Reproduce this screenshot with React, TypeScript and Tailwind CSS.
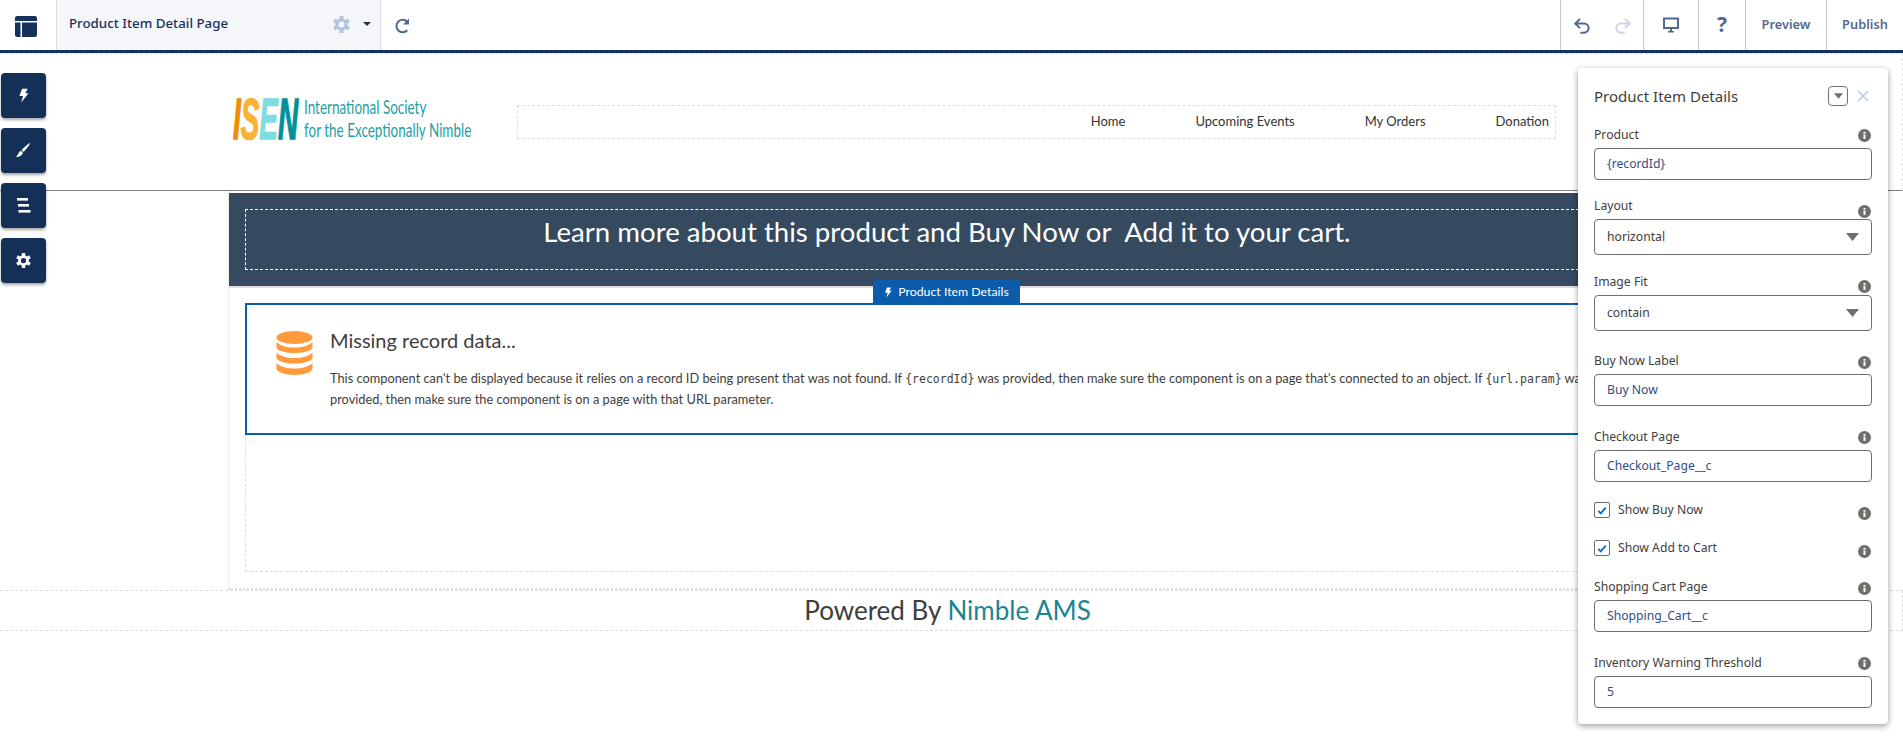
import React, { FC, ReactNode } from "react";
import { Undo2, Redo2, X } from "lucide-react";

const BoltIcon: FC<{ className?: string }> = ({ className }) => (
  <svg viewBox="0 0 12 16" className={className} fill="currentColor">
    <path d="M4.5 0.5H10.5L8 5.5H11.5L3.5 15.5L5.5 8.5H1.5Z" />
  </svg>
);

const GearIcon: FC<{ className?: string }> = ({ className }) => (
  <svg viewBox="0 0 16 16" className={className} fill="currentColor">
    <circle cx="8" cy="8" r="4.300" fill="none" stroke="currentColor" strokeWidth="3" />
    {[0, 60, 120, 180, 240, 300].map((deg) => (
      <rect key={deg} x="6.200" y="0" width="3.600" height="3.500" transform={`rotate(${deg} 8 8)`} />
    ))}
  </svg>
);

const InfoIcon: FC = () => (
  <svg viewBox="0 0 14 14" className="w-[13px] h-[13px] shrink-0">
    <circle cx="7" cy="7" r="7" fill="#706e6b" />
    <rect x="5.9" y="6" width="2.2" height="4.6" fill="#fff" />
    <rect x="5.9" y="3.2" width="2.2" height="1.9" fill="#fff" />
  </svg>
);

const Caret: FC = () => (
  <svg viewBox="0 0 10 6" className="w-[13px] h-[8px]">
    <path d="M0 0H10L5 6Z" fill="#706e6b" />
  </svg>
);

type FieldProps = {
  label: string;
  infoClass: string;
  className: string;
  children: ReactNode;
};

const Field: FC<FieldProps> = ({ label, infoClass, className, children }) => (
  <div className={className}>
    <div className="flex h-[26px] justify-between items-end">
      <span className="self-start leading-[25px] text-[12.2px] text-[#3e3e3c]">{label}</span>
      <span className={`pr-px ${infoClass}`}>
        <InfoIcon />
      </span>
    </div>
    {children}
  </div>
);

const TextInput: FC<{ value: string }> = ({ value }) => (
  <div className="h-[32px] border border-[#706e6b] rounded-[4px] pl-3 flex items-center text-[12.2px] text-[#2f4f86]">
    {value}
  </div>
);

const SelectInput: FC<{ value: string }> = ({ value }) => (
  <div className="h-[36px] border border-[#706e6b] rounded-[4px] px-3 flex items-center justify-between text-[12.2px] text-[#3e3e3c]">
    <span>{value}</span>
    <Caret />
  </div>
);

const CheckRow: FC<{ label: string; className: string }> = ({ label, className }) => (
  <div className={`flex items-start justify-between h-4 ${className}`}>
    <div className="flex items-center gap-2">
      <span className="w-4 h-4 border border-[#706e6b] rounded-[2px] flex items-center justify-center">
        <svg viewBox="0 0 12 10" className="w-[10px] h-[9px]">
          <path d="M1.5 5.5L4.5 8.5L10.5 1.5" fill="none" stroke="#0070d2" strokeWidth="2.2" />
        </svg>
      </span>
      <span className="text-[12.2px] text-[#3e3e3c]">{label}</span>
    </div>
    <span className="pr-px pt-[6px]">
      <InfoIcon />
    </span>
  </div>
);

const sideButton = "w-[45px] h-[45px] rounded-[4px] bg-[#142f58] text-white flex items-center justify-center shadow-[0_2px_3px_rgba(0,0,0,0.35)]";

const App: FC = () => {
  return (
    <div className="relative w-[1903px] h-[743px] overflow-hidden bg-white [font-family:'Noto_Sans',sans-serif]">
      {/* top toolbar */}
      <div className="h-[53px] border-b-[3px] border-[#16325c] flex">
        <div className="w-[56px] flex items-center justify-center pr-1 pt-[3px]">
          <svg viewBox="0 0 22 21" className="w-[22px] h-[21px]" fill="#16325c">
            <path d="M2 0H20A2 2 0 0 1 22 2V5H0V2A2 2 0 0 1 2 0Z" />
            <path d="M0 6.5H5.5V21H2A2 2 0 0 1 0 19Z" />
            <path d="M7 6.5H22V19A2 2 0 0 1 20 21H7Z" />
          </svg>
        </div>
        <div className="w-[325px] bg-[#f4f6f9] border-x border-[#d8dde6] flex items-center pl-3 pr-[9px] pb-[2px]">
          <span className="flex-1 text-[13.3px] font-medium text-[#16325c]">Product Item Detail Page</span>
          <GearIcon className="w-[17px] h-[17px] text-[#b0c4df] mr-[13px]" />
          <svg viewBox="0 0 8 4" className="w-2 h-1">
            <path d="M0 0H8L4 4Z" fill="#16325c" />
          </svg>
        </div>
        <div className="flex-1 flex items-center pl-[13px] pt-[2px]">
          <svg viewBox="0 0 16 16" className="w-[16px] h-[16px]">
            <path d="M13.2 3.8A6.200 6.200 0 1 0 13.2 12.200" fill="none" stroke="#54698d" strokeWidth="2" />
            <path d="M15 0.500V6.500H9Z" fill="#54698d" />
          </svg>
        </div>
        <div className="w-[343px] flex text-[#54698d]">
          <div className="w-[83px] border-l border-[#c9c9c9] flex items-center justify-center gap-[21px] pt-[2px]">
            <Undo2 className="w-5 h-5" strokeWidth={2.4} />
            <Redo2 className="w-5 h-5 text-[#c9d5e6]" strokeWidth={2.4} />
          </div>
          <div className="w-[55px] border-l border-[#c9c9c9] flex items-center justify-center">
            <svg viewBox="0 0 16 16" className="w-4 h-4">
              <path d="M1 1.500H15V11H1Z" fill="none" stroke="#54698d" strokeWidth="2" />
              <path d="M7 12H9V14H11V15.5H5V14H7Z" fill="#54698d" />
            </svg>
          </div>
          <div className="w-[47px] border-l border-[#c9c9c9] flex items-center justify-center text-[21px] font-bold">?</div>
          <div className="w-[81px] border-l border-[#c9c9c9] flex items-center justify-center text-[12.8px] font-semibold">Preview</div>
          <div className="flex-1 border-l border-[#c9c9c9] flex items-center justify-center text-[12.8px] font-semibold">Publish</div>
        </div>
      </div>

      {/* community page header */}
      <div className="h-[138px] border-t border-t-[#d8dde6] [border-top-style:dashed] border-b border-b-[#7d7d7d] border-r border-r-[#e5e5e5] [border-right-style:dashed] flex items-start pl-[233px] pt-[43px] [font-family:Lato,sans-serif]">
        <div className="w-[284px] h-[44px] flex items-start">
          <div className="w-[71px] h-[44px] overflow-visible">
            <div className="origin-top-left scale-x-[0.48] text-[58px] leading-[44px] font-bold italic whitespace-nowrap [-webkit-text-stroke:1.5px_currentColor] [font-family:'Liberation_Sans',sans-serif]">
              <span className="text-[#f28c00]">I</span>
              <span className="text-[#f9b233]">S</span>
              <span className="text-[#7fdde0]">E</span>
              <span className="text-[#00909a]">N</span>
            </div>
          </div>
          <div className="text-[#1f9ea3] text-[19px] leading-[23px] -mt-[2px] whitespace-nowrap origin-top-left scale-x-[0.71]">
            <div>International Society</div>
            <div>for the Exceptionally Nimble</div>
          </div>
        </div>
        <nav className="w-[1039px] h-[34px] mt-[8px] border border-dashed border-[#d8dde6] flex items-center justify-end gap-[70px] pr-[6px] pb-px text-[13px] text-[#333]">
          <span>Home</span>
          <span>Upcoming Events</span>
          <span>My Orders</span>
          <span>Donation</span>
        </nav>
      </div>

      {/* main content column */}
      <div className="ml-[228px] w-[1437px] h-[399px] border-l border-b-2 border-dotted border-[#d8dde6] [font-family:Lato,sans-serif] pt-[2px]">
        <div className="h-[95px] bg-[#354a5f] border-b-2 border-[#dddfe3] pt-[16px] px-4">
          <div className="h-[61px] border border-dashed border-white flex items-center justify-center pb-4 text-white text-[27.6px] whitespace-pre">
            Learn more about this product and Buy Now or  Add it to your cart.
          </div>
        </div>
        <div className="pt-[15px] pl-[16px] pr-4">
          <div className="h-[269px] border-b border-l border-dashed border-[#d8dde6]">
            <div className="h-[132px] border-2 border-[#0b5cab] flex pl-[29px] pt-[26px] -ml-px">
              <svg viewBox="0 0 36 44" className="w-[37px] h-[44px] shrink-0" fill="#ff9a3c">
                <ellipse cx="18" cy="6.5" rx="18" ry="6.5" />
                <path d="M0 11v5c0 3.5 8 6 18 6s18-2.5 18-6v-5c-3 3.5-10 5.500-18 5.500S3 14.500 0 11z" />
                <path d="M0 21.500v5c0 3.500 8 6 18 6s18-2.500 18-6v-5c-3 3.500-10 5.500-18 5.500S3 25 0 21.500z" />
                <path d="M0 32v5.500c0 3.500 8 6.500 18 6.500s18-3 18-6.500V32c-3 3.500-10 5.500-18 5.500S3 35.500 0 32z" />
              </svg>
              <div className="pl-[17px]">
                <div className="text-[20px] leading-[28px] text-[#3e3e3c] -mt-[5px]">Missing record data...</div>
                <div className="mt-[14px] text-[12.8px] leading-[20px] text-[#3e3e3c] whitespace-nowrap">
                  This component can't be displayed because it relies on a record ID being present that was not found. If <code className="[font-family:'DejaVu_Sans_Mono',monospace] text-[11.5px]">{"{recordId}"}</code> was provided, then make sure the component is on a page that's connected to an object. If <code className="[font-family:'DejaVu_Sans_Mono',monospace] text-[11.5px]">{"{url.param}"}</code> was
                  <br />
                  provided, then make sure the component is on a page with that URL parameter.
                </div>
              </div>
            </div>
          </div>
        </div>
      </div>

      {/* footer */}
      <div className="h-[41px] border-y border-r border-dashed border-[#d8dde6] flex items-center justify-center pr-[7px] text-[26px] text-[#3e3e3c] [font-family:Lato,sans-serif]">
        <span>Powered By <span className="text-[#1b8594]">Nimble AMS</span></span>
      </div>

      {/* floating left toolbar */}
      <div className="absolute left-px top-[73px] flex flex-col gap-[10px]">
        <div className={sideButton}>
          <BoltIcon className="w-[11px] h-[15px]" />
        </div>
        <div className={sideButton}>
          <svg viewBox="0 0 16 16" className="w-[15px] h-[15px]" fill="#fff">
            <path d="M15 0C15.500 1 10 8 8 9.500L6 7.500C8 5 14 0 15 0Z" />
            <path d="M5.200 8.300L7.300 10.500C7 13 4 15 0 15C2 13.500 2.500 9.500 5.200 8.300Z" />
          </svg>
        </div>
        <div className={sideButton}>
          <svg viewBox="0 0 15 15" className="w-[15px] h-[15px]" fill="#fff">
            <rect x="1" y="0" width="11" height="2.600" />
            <rect x="2" y="6" width="11" height="2.600" />
            <rect x="2.500" y="12" width="12" height="2.600" />
          </svg>
        </div>
        <div className={sideButton}>
          <GearIcon className="w-[15px] h-[15px]" />
        </div>
      </div>

      {/* selected component tab */}
      <div className="absolute left-[873px] top-[280px] w-[147px] h-[24px] bg-[#0b5cab] rounded-t-[2px] flex items-center justify-center gap-[6px] text-white text-[12.3px] [font-family:Lato,sans-serif]">
        <BoltIcon className="w-[8px] h-[11px]" />
        <span>Product Item Details</span>
      </div>

      {/* property editor */}
      <div className="absolute left-[1578px] top-[68px] w-[310px] h-[656px] bg-white rounded-[4px] shadow-[0_2px_6px_rgba(0,0,0,0.4)] px-4">
        <div className="flex items-center justify-between h-[54px] pt-[2px]">
          <span className="text-[15px] text-[#3e3e3c]">Product Item Details</span>
          <div className="flex items-center gap-[6px]">
            <span className="w-[20px] h-[20px] border border-[#706e6b] rounded-[4px] flex items-center justify-center">
              <svg viewBox="0 0 10 6" className="w-[9px] h-[6px]">
                <path d="M0 0H10L5 6Z" fill="#706e6b" />
              </svg>
            </span>
            <X className="w-[18px] h-[18px] text-[#b0c4df]" strokeWidth={1.8} />
          </div>
        </div>
        <Field label="Product" infoClass="pb-[6px]" className="">
          <TextInput value="{recordId}" />
        </Field>
        <Field label="Layout" infoClass="pb-px" className="mt-[13px]">
          <SelectInput value="horizontal" />
        </Field>
        <Field label="Image Fit" infoClass="pb-[2px]" className="mt-[14px]">
          <SelectInput value="contain" />
        </Field>
        <Field label="Buy Now Label" infoClass="pb-[5px]" className="mt-[17px]">
          <TextInput value="Buy Now" />
        </Field>
        <Field label="Checkout Page" infoClass="pb-[6px]" className="mt-[18px]">
          <TextInput value="Checkout_Page__c" />
        </Field>
        <CheckRow label="Show Buy Now" className="mt-[19px]" />
        <CheckRow label="Show Add to Cart" className="mt-[22px]" />
        <Field label="Shopping Cart Page" infoClass="pb-[5px]" className="mt-[19px]">
          <TextInput value="Shopping_Cart__c" />
        </Field>
        <Field label="Inventory Warning Threshold" infoClass="pb-[6px]" className="mt-[18px]">
          <TextInput value="5" />
        </Field>
      </div>
    </div>
  );
};

export default App;
